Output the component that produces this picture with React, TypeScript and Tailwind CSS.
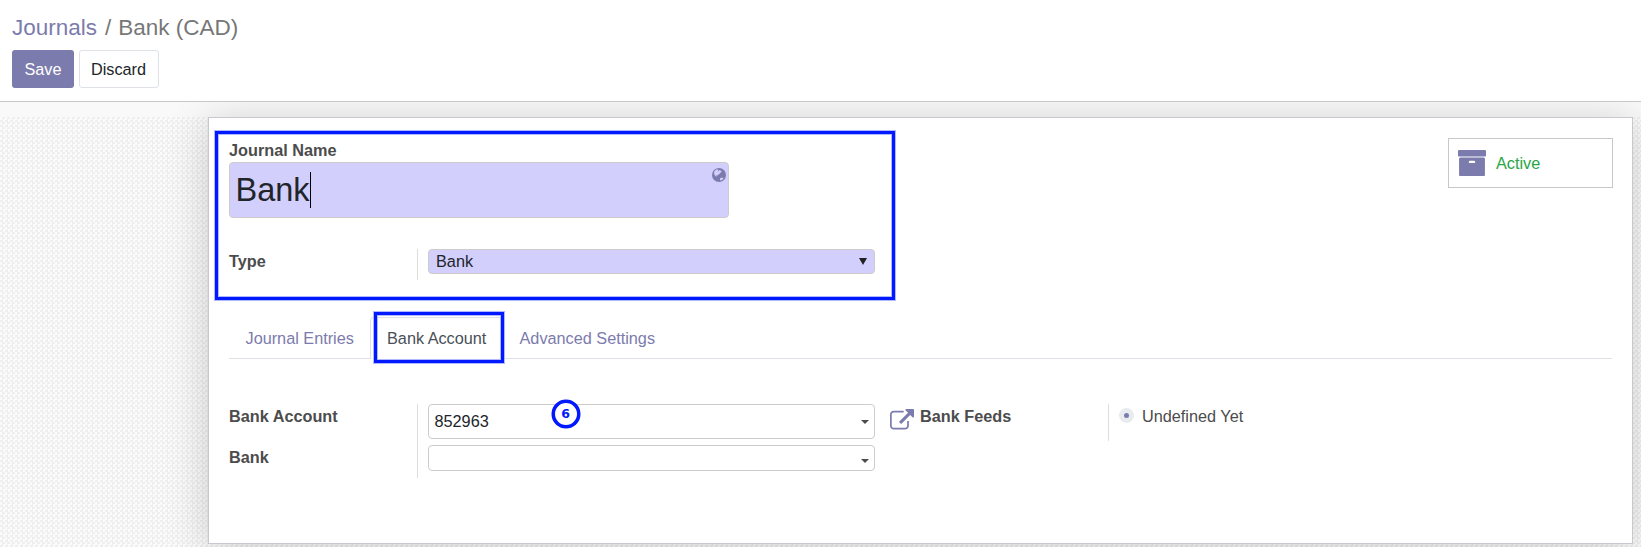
import React from "react";

function Globe() {
  return (
    <svg viewBox="0 0 14 14" className="h-[14px] w-[14px]">
      <circle cx="7" cy="7" r="7" fill="#7c7bad" />
      <path d="M2.4 3.2 4.2 1.6l1.8 0 .4.8-.9.8.6.4 1.4-1.5 1.8.8.4 1.2-1.2.3-.6 1.1-1.4.9-.6 1.1-1-.5-.6.4.5 1-.8.1L2.6 7.1 2.1 5zM7.9 10.6l1.3-1 1 .5 1.4-.5-.5 1.4-1.6 1.2-1.2.3z" fill="#d2cffd" />
    </svg>
  );
}

function ExternalLink() {
  return (
    <svg viewBox="0 0 1792 1792" className="h-6 w-6" fill="#7c7bad">
      <path d="M1408 928v320q0 119-84.5 203.5t-203.5 84.5h-832q-119 0-203.5-84.5t-84.5-203.5v-832q0-119 84.5-203.5t203.5-84.5h704q14 0 23 9t9 23v64q0 14-9 23t-23 9h-704q-66 0-113 47t-47 113v832q0 66 47 113t113 47h832q66 0 113-47t47-113v-320q0-14 9-23t23-9h64q14 0 23 9t9 23zm384-864v512q0 26-19 45t-45 19-45-19l-176-176-652 652q-10 10-23 10t-23-10l-114-114q-10-10-10-23t10-23l652-652-176-176q-19-19-19-45t19-45 45-19h512q26 0 45 19t19 45z" />
    </svg>
  );
}

function Archive() {
  return (
    <svg viewBox="64 128 1664 1536" preserveAspectRatio="none" className="h-[26px] w-7" fill="#7c7bad">
      <path d="M1088 832q0-26-19-45t-45-19h-256q-26 0-45 19t-19 45 19 45 45 19h256q26 0 45-19t19-45zm576-192v960q0 26-19 45t-45 19h-1408q-26 0-45-19t-19-45v-960q0-26 19-45t45-19h1408q26 0 45 19t19 45zm64-448v256q0 26-19 45t-45 19h-1536q-26 0-45-19t-19-45v-256q0-26 19-45t45-19h1536q26 0 45 19t19 45z" />
    </svg>
  );
}

function Caret() {
  return (
    <svg viewBox="0 0 8 4" className="h-1 w-2" fill="#4c4c4c">
      <path d="M0 0h8L4 4z" />
    </svg>
  );
}

export default function App() {
  return (
    <div className="relative flex h-[547px] w-full flex-col overflow-hidden bg-white font-['Liberation_Sans',Arial,sans-serif] text-[16.25px] leading-6 text-[#4c4c4c]">
      <header className="relative z-10 h-[102px] shrink-0 border-b border-[#c8c8c8] bg-white pl-3 pt-[11px]">
        <div className="flex h-[33px] items-center text-[22.5px] text-[#777]">
          <span className="text-[#7c7bad]">Journals</span>
          <span className="pl-2 pr-[7px]">/</span>
          <span>Bank (CAD)</span>
        </div>
        <div className="mt-[6px] flex gap-[5px]">
          <button className="h-[38px] w-[62px] rounded-[3px] bg-[#7c7bad] pb-px text-white">Save</button>
          <button className="h-[38px] w-20 rounded-[3px] border border-[#dee2e6] pb-px pr-px text-[#212529]">Discard</button>
        </div>
      </header>

      <main className="h-[445px] bg-[#f9f9f9] pt-[15px]">
        <div className="h-[430px] bg-[repeating-conic-gradient(#efefef_0_25%,#fbfbfb_0_50%)] bg-[length:5px_5px] pl-52">
          <section className="h-[427px] w-[1425px] border border-[#c8c8d3] bg-white px-5 pt-5 shadow-[0_5px_40px_rgba(0,0,0,0.18)]">
            <div className="flex h-[111px] justify-between">
              <div className="w-[500px]">
                <div className="h-6 font-bold leading-[25px]">Journal Name</div>
                <div className="flex h-14 justify-between rounded-[4px] border border-[#ccc] bg-[#d2cffd] pl-[5.5px] pr-[2px]">
                  <div className="mt-[9px] flex h-9 items-center text-[32.5px] leading-9 text-[#212529]">
                    <span>Bank</span>
                    <span className="h-9 w-px bg-black" />
                  </div>
                  <span className="pt-[5px]"><Globe /></span>
                </div>
              </div>
              <div className="-mr-px flex h-[50px] w-[165px] items-center border border-[#c8c8c8] pl-[9px] text-[#28a745]">
                <Archive />
                <span className="ml-[10px] pb-px">Active</span>
              </div>
            </div>

            <div className="flex h-[68px]">
              <div className="w-[188px] font-bold">Type</div>
              <div className="h-[31px] w-[11px] border-l border-[#ddd]" />
              <div className="flex h-[25px] w-[447px] items-center justify-between rounded-[4px] border border-[#ccc] bg-[#d2cffd] pl-[7px] pr-[7px] text-[#212529]">
                <span className="pb-[2px] leading-[22px]">Bank</span>
                <svg viewBox="0 0 8 7" className="h-[7px] w-2" fill="#212121"><path d="M0 0h8L4 7z" /></svg>
              </div>
            </div>

            <nav className="flex h-[42px] border-b border-[#dee2e6] text-[#7c7bad]">
              <div className="w-[141px] pl-[16.5px] pt-[9px]">Journal Entries</div>
              <div className="h-[42px] w-[134px] rounded-t-[4px] border border-b-0 border-[#dee2e6] bg-white pl-4 pt-2 text-[#495057]">Bank Account</div>
              <div className="pl-[15.5px] pt-[9px]">Advanced Settings</div>
            </nav>

            <div className="flex pt-[45px]">
              <div className="flex w-[188px] flex-col gap-[17px] font-bold">
                <span>Bank Account</span>
                <span>Bank</span>
              </div>
              <div className="h-[74px] w-[11px] border-l border-[#ddd]" />
              <div className="flex w-[447px] flex-col gap-[6px]">
                <div className="flex h-[35px] items-center justify-between rounded-[4px] border border-[#ccc] pl-[5.5px] pr-[5px] text-[#212529]">
                  <span className="pb-px">852963</span><Caret />
                </div>
                <div className="flex h-[26px] items-center justify-end rounded-[4px] border border-[#ccc] pr-[5px] pt-[5px]">
                  <Caret />
                </div>
              </div>
              <div className="ml-[15px] w-[30px] pt-[5px]"><ExternalLink /></div>
              <div className="w-[188px] font-bold">Bank Feeds</div>
              <div className="h-[37px] w-[11px] border-l border-[#ddd]" />
              <div className="flex h-6 gap-2">
                <span className="mt-1 flex h-[15px] w-[15px] items-center justify-center rounded-full bg-[#e9ecef]">
                  <span className="h-[5px] w-[5px] rounded-full bg-[#7c7bad]" />
                </span>
                <span>Undefined Yet</span>
              </div>
            </div>
          </section>
        </div>
      </main>

      <div className="absolute left-[215px] top-[131px] z-20 h-[169px] w-[680px] border-[3px] border-[#0019ff] shadow-[0_0_0_1px_#b0b8ff,inset_0_0_0_1px_#b0b8ff]" />
      <div className="absolute left-[374px] top-[312px] z-20 h-[51px] w-[130px] border-[3px] border-[#0019ff] shadow-[0_0_0_1px_#b0b8ff,inset_0_0_0_1px_#b0b8ff]" />
      <div className="absolute left-[551.5px] top-[399.5px] z-20 flex h-7 w-7 items-center justify-center rounded-full border-[3px] border-[#0019ff] bg-white font-['DejaVu_Sans',sans-serif] text-[12.5px] font-bold text-[#0019ff] shadow-[0_0_0_0.5px_#0019ff]">6</div>
    </div>
  );
}
